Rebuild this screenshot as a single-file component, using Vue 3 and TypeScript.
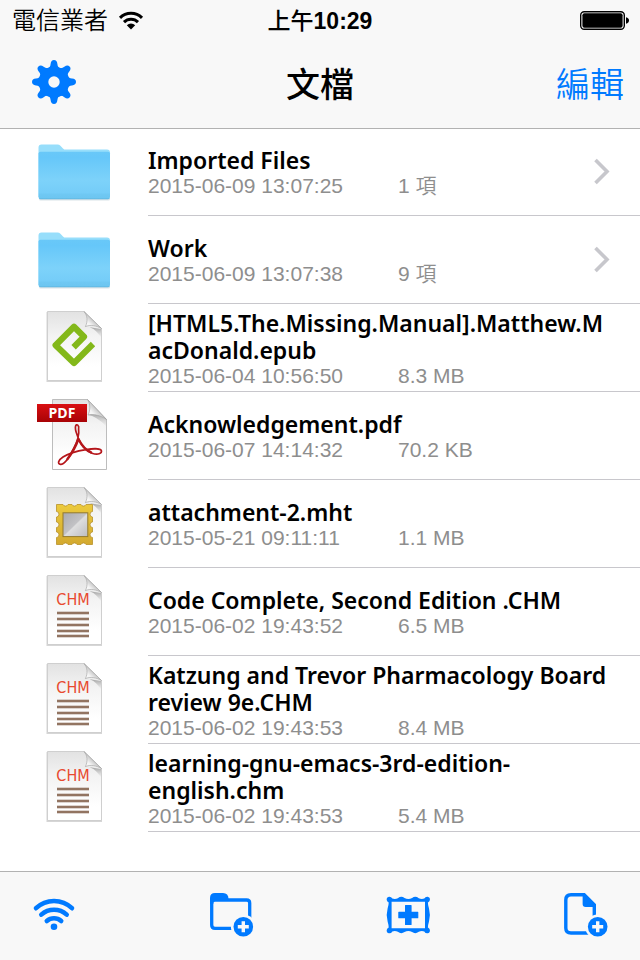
<script setup lang="ts">
type Kind = 'folder' | 'epub' | 'pdf' | 'mht' | 'chm'

interface Entry {
  name: string
  modified: string
  detail: string
  kind: Kind
}

const entries: Entry[] = [
  { name: 'Imported Files', modified: '2015-06-09 13:07:25', detail: '1 項', kind: 'folder' },
  { name: 'Work', modified: '2015-06-09 13:07:38', detail: '9 項', kind: 'folder' },
  { name: '[HTML5.The.Missing.Manual].Matthew.MacDonald.epub', modified: '2015-06-04 10:56:50', detail: '8.3 MB', kind: 'epub' },
  { name: 'Acknowledgement.pdf', modified: '2015-06-07 14:14:32', detail: '70.2 KB', kind: 'pdf' },
  { name: 'attachment-2.mht', modified: '2015-05-21 09:11:11', detail: '1.1 MB', kind: 'mht' },
  { name: 'Code Complete, Second Edition .CHM', modified: '2015-06-02 19:43:52', detail: '6.5 MB', kind: 'chm' },
  { name: 'Katzung and Trevor Pharmacology Board review 9e.CHM', modified: '2015-06-02 19:43:53', detail: '8.4 MB', kind: 'chm' },
  { name: 'learning-gnu-emacs-3rd-edition-english.chm', modified: '2015-06-02 19:43:53', detail: '5.4 MB', kind: 'chm' },
]

const teeth = [0, 45, 90, 135, 180, 225, 270, 315]
const chmLines = [45, 51, 57, 63, 68]
</script>

<template>
  <div class="screen">
    <svg class="defs" width="0" height="0" aria-hidden="true">
      <defs>
        <linearGradient id="folderFront" x1="0" y1="0" x2="0" y2="1">
          <stop offset="0" stop-color="#69c8f8" />
          <stop offset="0.12" stop-color="#66c7f9" />
          <stop offset="0.6" stop-color="#7dd2fa" />
          <stop offset="0.86" stop-color="#75cdf8" />
          <stop offset="0.9" stop-color="#6fc8f3" />
          <stop offset="0.97" stop-color="#6dc6f1" />
          <stop offset="1" stop-color="#5db4dd" />
        </linearGradient>
        <linearGradient id="paper" x1="0" y1="0" x2="0" y2="1">
          <stop offset="0" stop-color="#e2e2e2" />
          <stop offset="0.35" stop-color="#f3f3f3" />
          <stop offset="0.8" stop-color="#ffffff" />
        </linearGradient>
        <linearGradient id="curl" x1="0" y1="1" x2="0.6" y2="0.4">
          <stop offset="0" stop-color="#ffffff" />
          <stop offset="0.5" stop-color="#f4f4f4" />
          <stop offset="1" stop-color="#b4b4b4" />
        </linearGradient>
        <linearGradient id="curlShade" x1="0" y1="0" x2="0" y2="1">
          <stop offset="0" stop-color="#777777" stop-opacity="0.7" />
          <stop offset="1" stop-color="#bbbbbb" stop-opacity="0.1" />
        </linearGradient>
        <linearGradient id="banner" x1="0" y1="0" x2="0" y2="1">
          <stop offset="0" stop-color="#d90f12" />
          <stop offset="1" stop-color="#a80306" />
        </linearGradient>
        <linearGradient id="gold" x1="0" y1="0" x2="0" y2="1">
          <stop offset="0" stop-color="#ecca3c" />
          <stop offset="1" stop-color="#d3a92f" />
        </linearGradient>
        <linearGradient id="glass" x1="0" y1="0" x2="1" y2="1">
          <stop offset="0" stop-color="#a9a9ad" />
          <stop offset="0.48" stop-color="#c2c2c5" />
          <stop offset="0.52" stop-color="#dededf" />
          <stop offset="1" stop-color="#bcbcbe" />
        </linearGradient>
      </defs>
    </svg>

    <header class="top">
      <div class="status">
        <div class="carrier">
          <span>電信業者</span>
          <svg width="26" height="20" viewBox="0 0 26 20" aria-hidden="true">
            <g fill="none" stroke="#000" stroke-width="3">
              <path d="M2 6.9A15.5 15.5 0 0 1 24 6.9" />
              <path d="M6 11.1A9.8 9.8 0 0 1 20 11.1" />
            </g>
            <path d="M13 18.5L8.8 14.3A6 6 0 0 1 17.2 14.3Z" />
          </svg>
        </div>
        <div class="time">上午<b>10:29</b></div>
        <div class="battery">
          <svg width="50" height="20" viewBox="0 0 50 20" aria-hidden="true">
            <rect x="0.7" y="0.7" width="43.6" height="17.6" rx="3.5" fill="#fff" stroke="#000" stroke-width="1.4" />
            <rect x="2.4" y="2.3" width="40.2" height="14.4" rx="2" />
            <path d="M46 6.3Q49 7.1 49 9.5Q49 11.9 46 12.7Z" />
          </svg>
        </div>
      </div>
      <div class="bar">
        <button class="icon-button settings" type="button" aria-label="設定">
          <svg width="44" height="44" viewBox="-22 -22 44 44">
            <g fill="#007aff">
              <circle r="15.4" />
              <path
                v-for="angle in teeth"
                :key="angle"
                :transform="`rotate(${angle})`"
                d="M-7 -13Q-3.6 -14.5 -3.4 -18Q-3 -22 0 -22Q3 -22 3.4 -18Q3.6 -14.5 7 -13Z"
              />
            </g>
            <circle r="5.7" fill="#f8f8f8" />
          </svg>
        </button>
        <h1>文檔</h1>
        <button class="edit" type="button">編輯</button>
      </div>
    </header>

    <main>
      <ul class="list">
        <li v-for="entry in entries" :key="entry.name">
          <a class="row" href="#">
            <svg class="thumb" width="76" height="87" viewBox="0 0 76 87" aria-hidden="true">
              <g v-if="entry.kind === 'folder'">
                <rect x="3" y="69" width="71" height="3.4" rx="1.5" fill="#d9e3e8" />
                <path d="M2.5 69V19.5Q2.5 16.5 5.5 16.5H21.5Q23.3 16.5 24.4 17.8L27 20.4Q28 21.6 30 21.6H71Q74 21.6 74 24.6V69Z" fill="#97defb" />
                <path d="M2.5 25.5Q2.5 23.8 4.5 23.8H72Q74 23.8 74 25.5V69Q74 71.2 72 71.2H4.5Q2.5 71.2 2.5 69Z" fill="url(#folderFront)" />
              </g>
              <g v-else-if="entry.kind === 'pdf'">
                <path d="M16.5 8H51.5L70.5 27.5V78H16.5Z" fill="#dddddd" />
                <path d="M16.5 7.5H51.5L70.5 27.5V77.5H16.5Z" fill="url(#paper)" stroke="#bdbdbd" />
                <path d="M52 23Q60 24 70 34V27L60 20Z" fill="url(#curlShade)" />
                <path d="M51.5 7.5C54.5 12 54.5 18 52 23C57 21.5 65 23.5 70.5 27.5Z" fill="url(#curl)" stroke="#9c9c9c" stroke-width="0.6" />
                <rect x="1" y="12" width="50" height="18" fill="url(#banner)" />
                <text x="26" y="26" text-anchor="middle" class="pdf-label">PDF</text>
                <g fill="none" stroke="#b5161b" stroke-linecap="round" stroke-linejoin="round">
                  <path d="M42.6 37C43.5 33 40.5 31.5 39.6 34C38.5 38 41 42 42.4 46.5C44.5 52 49.5 59 56 61.2C62 63.2 66 61.5 65.4 58.8C64.8 56.6 58 56.2 50 57.6C41 59 32.5 61.5 27 65C22 68.2 21.3 72 24.5 72.4C28.5 72.8 34 64 37.8 56.5C41.5 49 43.4 42 42.6 37" stroke-width="1.7" />
                  <path d="M42.4 47C40 54 36 61 31.5 67M43 48C46 54 50 58 55 60.4" stroke-width="2.4" />
                </g>
              </g>
              <g v-else>
                <path d="M10.5 8H48L66 25V78H10.5Z" fill="#d6d6d6" />
                <path d="M11.5 7.5H48L65.5 24.5V76.5H11.5Z" fill="url(#paper)" stroke="#cfcfcf" />
                <path d="M49 22.6Q57 22 65 33V25Z" fill="url(#curlShade)" />
                <path d="M48 7.5C51.5 11.5 52 17 49.4 22.6C54 20.4 60.5 21.5 65.5 24.5Z" fill="url(#curl)" stroke="#a0a0a0" stroke-width="0.6" />
                <path
                  v-if="entry.kind === 'epub'"
                  d="M57 40L38 59L19.6 41.2L38 22.8L48 32.8L37.6 43.2"
                  fill="none"
                  stroke="#83b81a"
                  stroke-width="6.2"
                  stroke-linejoin="round"
                />
                <g v-else-if="entry.kind === 'mht'">
                  <path
                    d="M20.5 24.5H27A2.6 2.2 0 0 0 32 24.5H36A2.6 2.2 0 0 0 41 24.5H45A2.6 2.2 0 0 0 50 24.5H56.5V31.5A2.4 2.7 0 0 0 56.5 37V42A2.4 2.7 0 0 0 56.5 47.5V52A2.4 2.7 0 0 0 56.5 57.5V64.5H50A2.6 2.2 0 0 0 45 64.5H41A2.6 2.2 0 0 0 36 64.5H32A2.6 2.2 0 0 0 27 64.5H20.5V57.5A2.4 2.7 0 0 0 20.5 52V47.5A2.4 2.7 0 0 0 20.5 42V37A2.4 2.7 0 0 0 20.5 31.5Z"
                    fill="url(#gold)"
                    stroke="#b8922a"
                    stroke-width="0.8"
                    stroke-linejoin="round"
                  />
                  <rect x="27" y="32.8" width="24.8" height="23.8" fill="url(#glass)" stroke="#947a2d" />
                </g>
                <g v-else>
                  <text x="37" y="37" text-anchor="middle" class="chm-label">CHM</text>
                  <path v-for="y in chmLines" :key="y" :d="`M21 ${y}H53`" stroke="#927461" stroke-width="2.6" />
                </g>
              </g>
            </svg>
            <span class="body">
              <span class="name">{{ entry.name }}</span>
              <span class="meta">
                <span class="modified">{{ entry.modified }}</span>
                <span>{{ entry.detail }}</span>
              </span>
            </span>
            <svg v-if="entry.kind === 'folder'" class="chevron" width="16" height="26" viewBox="0 0 16 26" aria-hidden="true">
              <path d="M1.5 1L13 12.5L1.5 24" fill="none" stroke="#c7c7cc" stroke-width="3.6" />
            </svg>
          </a>
        </li>
      </ul>
    </main>

    <footer class="toolbar">
      <button class="icon-button" type="button" aria-label="Wi-Fi">
        <svg width="44" height="44" viewBox="0 0 44 44">
          <g fill="none" stroke="#007aff" stroke-width="4.6" stroke-linecap="round">
            <path d="M4 14.2A26 26 0 0 1 40 14.2" />
            <path d="M9.3 20.6A19 19 0 0 1 34.7 20.6" />
            <path d="M14.8 27A11 11 0 0 1 29.2 27" />
          </g>
          <circle cx="22" cy="32.8" r="3.3" fill="#007aff" />
        </svg>
      </button>
      <button class="icon-button" type="button" aria-label="新增檔案夾">
        <svg width="44" height="44" viewBox="0 0 44 44">
          <path d="M2.7 6V31Q2.7 34.3 6 34.3H37.5Q40.7 34.3 40.7 31V9Q40.7 6 37.5 6H6Q2.7 6 2.7 9" fill="none" stroke="#007aff" stroke-width="3.3" />
          <path d="M1 10V4Q1 -1 6 -1H14Q19.4 -1 19.6 5.4V7H6Q4.3 7 4.3 9V10Z" fill="#007aff" />
          <circle cx="34.3" cy="32.8" r="12.4" fill="#f8f8f8" />
          <circle cx="34.3" cy="32.8" r="9.8" fill="#007aff" />
          <path d="M34.3 27.3V38.3M28.8 32.8H39.8" stroke="#f8f8f8" stroke-width="3.4" />
        </svg>
      </button>
      <button class="icon-button" type="button" aria-label="新增圖片">
        <svg width="44" height="44" viewBox="0 0 44 44">
          <path
            fill="#007aff"
            fill-rule="evenodd"
            d="M2 2.7Q4.3 2.5 5.3 4.6Q8.3 5.6 10.8 4.2Q14.3 1.6 17.5 4Q21.3 6 25.1 4Q28.3 1.6 31.8 4.2Q34.3 5.6 37.3 4.6Q38.3 2.5 40.6 2.7Q43.2 3.2 42.9 6Q42.5 7.7 40.9 8.4Q40.9 11 42 14.5Q43.8 21 42 27.5Q40.9 31 40.9 33.6Q42.5 34.3 42.9 36Q43.2 38.8 40.6 39.3Q38.3 39.5 37.3 37.4Q34.3 36.4 31.8 37.8Q28.3 40.4 25.1 38Q21.3 36 17.5 38Q14.3 40.4 10.8 37.8Q8.3 36.4 5.3 37.4Q4.3 39.5 2 39.3Q-.6 38.8 -.3 36Q.1 34.3 1.7 33.6Q1.7 31 .6 27.5Q-1.2 21 .6 14.5Q1.7 11 1.7 8.4Q.1 7.7 -.3 6Q-.6 3.2 2 2.7ZM4.6 7.7V34.3H38V7.7Z"
          />
          <path d="M18.6 11.6H24V18.3H30.7V23.7H24V30.4H18.6V23.7H11.9V18.3H18.6Z" fill="#007aff" stroke="#007aff" stroke-width="1.2" stroke-linejoin="round" />
        </svg>
      </button>
      <button class="icon-button" type="button" aria-label="新增檔案">
        <svg width="44" height="44" viewBox="0 0 44 44">
          <path d="M30.3 22V11L20 .8H7Q1.8 .8 1.8 6V34Q1.8 39 7 39H26" fill="none" stroke="#007aff" stroke-width="3.4" />
          <path d="M18.6 -1H20.6L32 10.4V13H21.6Q18.6 13 18.6 10Z" fill="#007aff" />
          <circle cx="33.7" cy="32.8" r="12.4" fill="#f8f8f8" />
          <circle cx="33.7" cy="32.8" r="9.8" fill="#007aff" />
          <path d="M33.7 27.3V38.3M28.2 32.8H39.2" stroke="#f8f8f8" stroke-width="3.4" />
        </svg>
      </button>
    </footer>
  </div>
</template>

<style>
body {
  background: #fff;
}
</style>

<style scoped>
.screen {
  display: flex;
  flex-direction: column;
  min-height: 100vh;
  color: #000;
  font-family: "Liberation Sans", "Noto Sans CJK TC", sans-serif;
}

.defs {
  position: absolute;
}

svg {
  display: block;
  overflow: visible;
}

button {
  padding: 0;
  border: 0;
  background: none;
  font: inherit;
  cursor: pointer;
}

.top {
  height: 128px;
  background: #f8f8f8;
  box-shadow: 0 1px 0 #b2b2b2;
}

.status {
  display: grid;
  grid-template-columns: 1fr auto 1fr;
  align-items: center;
  height: 42px;
  padding: 0 10px;
}

.carrier {
  display: flex;
  align-items: center;
  gap: 10px;
  padding-left: 2px;
  font-size: 24px;
  font-weight: 350;
  line-height: 42px;
}

.time {
  font-size: 23px;
  font-weight: 500;
  line-height: 42px;
}

.battery {
  justify-self: end;
}

.bar {
  display: grid;
  grid-template-columns: 1fr auto 1fr;
  align-items: center;
  height: 80px;
  padding: 0 16px;
}

.icon-button {
  width: 44px;
  height: 44px;
}

.settings {
  margin-left: 16px;
}

h1,
.edit {
  margin: 0;
  padding-top: 6px;
  font-size: 34px;
  line-height: 44px;
}

h1 {
  font-weight: 500;
}

.edit {
  justify-self: end;
  color: #007aff;
  font-weight: 350;
}

main {
  flex: 1;
}

.list {
  margin: 0;
  padding: 0;
  list-style: none;
}

.row {
  display: flex;
  min-height: 88px;
  padding-left: 36px;
  color: inherit;
  text-decoration: none;
  background: linear-gradient(#c8c7cc, #c8c7cc) 148px 100% / 100% 1px no-repeat;
}

.thumb {
  flex: none;
}

.body {
  display: flex;
  flex: 1;
  flex-direction: column;
  justify-content: center;
  min-width: 0;
  padding: 1px 28px 0 36px;
}

.name {
  font-family: "Noto Sans", sans-serif;
  font-size: 23px;
  font-weight: 600;
  line-height: 27px;
  overflow-wrap: anywhere;
}

.meta {
  display: flex;
  color: #8e8e8e;
  font-size: 21px;
  font-weight: 350;
  line-height: 24px;
}

.modified {
  width: 250px;
}

.chevron {
  align-self: center;
  margin-right: 30px;
}

.pdf-label {
  fill: #fff;
  font-family: "Open Sans", sans-serif;
  font-size: 14px;
  font-weight: 700;
}

.chm-label {
  fill: #e8492f;
  font-family: "DejaVu Sans Condensed", "Liberation Sans", sans-serif;
  font-size: 16px;
  font-weight: 400;
}

.toolbar {
  display: flex;
  align-items: center;
  justify-content: space-between;
  height: 88px;
  padding: 0 32px;
  border-top: 1px solid #b2b2b2;
  background: #f8f8f8;
}
</style>
